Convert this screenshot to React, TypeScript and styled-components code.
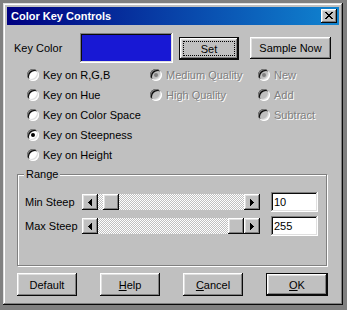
import styled, { createGlobalStyle, css } from "styled-components";

const GlobalStyle = createGlobalStyle`
  html, body {
    margin: 0;
    padding: 0;
    background: #808080;
  }
  body {
    font-family: "Liberation Sans", Arial, sans-serif;
    font-size: 11px;
    color: #000;
  }
`;

const raised = css`
  background: #c0c0c0;
  box-shadow:
    inset -1px -1px #0a0a0a,
    inset 1px 1px #fff,
    inset -2px -2px #808080,
    inset 2px 2px #dfdfdf;
`;

const sunken = css`
  box-shadow:
    inset -1px -1px #fff,
    inset 1px 1px #808080,
    inset -2px -2px #dfdfdf,
    inset 2px 2px #0a0a0a;
`;

const Screen = styled.div`
  width: 347px;
  height: 310px;
  padding: 3px 0 0 3px;
  box-sizing: border-box;
`;

const Window = styled.div`
  width: 340px;
  height: 302px;
  box-sizing: border-box;
  padding: 4px;
  background: #c0c0c0;
  box-shadow:
    inset -1px -1px #0a0a0a,
    inset 1px 1px #dfdfdf,
    inset -2px -2px #808080,
    inset 2px 2px #fff;
`;

const TitleBar = styled.div`
  height: 18px;
  display: flex;
  align-items: center;
  justify-content: space-between;
  padding: 0 2px 0 4px;
  background: linear-gradient(90deg, #000080, #1084d0);
  color: #fff;
  font-weight: bold;
  font-size: 11px;
`;

const CloseButton = styled.div`
  ${raised};
  width: 16px;
  height: 14px;
  display: flex;
  align-items: center;
  justify-content: center;
  padding-bottom: 1px;
  box-sizing: border-box;
`;

const TopRow = styled.div`
  display: flex;
  align-items: flex-start;
  margin-top: 8px;
  padding-left: 7px;
`;

const FieldLabel = styled.span<{ $width: number }>`
  width: ${(p) => p.$width}px;
  flex-shrink: 0;
  align-self: center;
  white-space: nowrap;
`;

const Swatch = styled.div`
  width: 93px;
  height: 30px;
  box-sizing: border-box;
  background: #1818d4;
  ${sunken};
`;

const Button = styled.div<{ $w: number; $h?: number; $default?: boolean; $focus?: boolean }>`
  ${raised};
  position: relative;
  width: ${(p) => p.$w}px;
  height: ${(p) => p.$h ?? 23}px;
  box-sizing: border-box;
  display: flex;
  align-items: center;
  justify-content: center;
  white-space: nowrap;
  ${(p) =>
    p.$default &&
    css`
      border: 1px solid #0a0a0a;
    `}
  ${(p) =>
    p.$focus &&
    css`
      &::after {
        content: "";
        position: absolute;
        inset: 3px;
        border: 1px dotted #000;
      }
    `}
  u {
    text-decoration: underline;
    text-underline-offset: 1px;
  }
`;

const TopButton = styled(Button)<{ $ml: number }>`
  margin-left: ${(p) => p.$ml}px;
  margin-top: 4px;
`;

const Options = styled.div`
  display: flex;
  margin-top: 2px;
  padding-left: 20px;
`;

const OptionColumn = styled.div<{ $width?: number }>`
  display: flex;
  flex-direction: column;
  width: ${(p) => (p.$width ? `${p.$width}px` : "auto")};
`;

const OptionRow = styled.label<{ $disabled?: boolean }>`
  height: 20px;
  display: flex;
  align-items: center;
  gap: 4px;
  white-space: nowrap;
  color: ${(p) => (p.$disabled ? "#808080" : "#000")};
  text-shadow: ${(p) => (p.$disabled ? "1px 1px 0 #fff" : "none")};
`;

const RadioCircle = styled.span<{ $checked?: boolean; $disabled?: boolean }>`
  width: 12px;
  height: 12px;
  flex-shrink: 0;
  border-radius: 50%;
  box-sizing: border-box;
  display: flex;
  align-items: center;
  justify-content: center;
  background: ${(p) => (p.$disabled ? "#c0c0c0" : "#fff")};
  ${sunken};
  &::after {
    content: "";
    width: 4px;
    height: 4px;
    border-radius: 50%;
    background: ${(p) => (p.$disabled ? "#808080" : "#000")};
    display: ${(p) => (p.$checked ? "block" : "none")};
  }
`;

const GroupBox = styled.div`
  position: relative;
  margin: 9px 0 0 10px;
  width: 310px;
  height: 92px;
  box-sizing: border-box;
  border: 1px solid #808080;
  box-shadow:
    inset 1px 1px #fff,
    1px 1px 0 #fff;
  padding: 17px 0 0 7px;
  display: flex;
  flex-direction: column;
  gap: 4px;
`;

const Legend = styled.span`
  position: absolute;
  top: -7px;
  left: 6px;
  padding: 0 2px;
  background: #c0c0c0;
`;

const SliderRow = styled.div`
  display: flex;
  align-items: center;
  height: 20px;
`;

const ScrollBar = styled.div`
  display: flex;
  width: 178px;
  height: 16px;
`;

const ArrowButton = styled.div`
  ${raised};
  width: 16px;
  height: 16px;
  flex-shrink: 0;
  display: flex;
  align-items: center;
  justify-content: center;
`;

const Track = styled.div`
  flex: 1;
  position: relative;
  background: repeating-conic-gradient(#c0c0c0 0% 25%, #fff 0% 50%) 0 0 / 2px 2px;
`;

const Thumb = styled.div`
  ${raised};
  position: absolute;
  top: 0;
  width: 16px;
  height: 16px;
`;

const TextBox = styled.div`
  ${sunken};
  background: #fff;
  margin-left: 11px;
  width: 47px;
  height: 20px;
  box-sizing: border-box;
  padding: 0 3px;
  display: flex;
  align-items: center;
`;

const ButtonRow = styled.div`
  display: flex;
  justify-content: space-between;
  width: 311px;
  margin: 7px 0 0 10px;
`;

const Pixels = ({ w, h, cells }: { w: number; h: number; cells: string[] }) => (
  <svg width={w} height={h} viewBox={`0 0 ${w} ${h}`} shapeRendering="crispEdges">
    {cells.flatMap((row, y) =>
      row.split("").map((c, x) =>
        c === "#" ? <rect key={`${x}-${y}`} x={x} y={y} width={1} height={1} fill="#000" /> : null,
      ),
    )}
  </svg>
);

const CLOSE = ["##....##", ".##..##.", "..####..", "...##...", "..####..", ".##..##.", "##....##"];
const LEFT = ["...#", "..##", ".###", "####", ".###", "..##", "...#"];
const RIGHT = ["#...", "##..", "###.", "####", "###.", "##..", "#..."];

const Slider = ({ label, value }: { label: string; value: number }) => {
  const travel = 178 - 32 - 16;
  return (
    <SliderRow>
      <FieldLabel $width={57}>{label}</FieldLabel>
      <ScrollBar>
        <ArrowButton>
          <Pixels w={4} h={7} cells={LEFT} />
        </ArrowButton>
        <Track>
          <Thumb style={{ left: Math.round((value / 255) * travel) }} />
        </Track>
        <ArrowButton>
          <Pixels w={4} h={7} cells={RIGHT} />
        </ArrowButton>
      </ScrollBar>
      <TextBox>{value}</TextBox>
    </SliderRow>
  );
};

type Opt = { text: string; checked?: boolean; disabled?: boolean };

const columns: { width?: number; items: Opt[] }[] = [
  {
    width: 123,
    items: [
      { text: "Key on R,G,B" },
      { text: "Key on Hue" },
      { text: "Key on Color Space" },
      { text: "Key on Steepness", checked: true },
      { text: "Key on Height" },
    ],
  },
  {
    width: 108,
    items: [
      { text: "Medium Quality", checked: true, disabled: true },
      { text: "High Quality", disabled: true },
    ],
  },
  {
    items: [
      { text: "New", checked: true, disabled: true },
      { text: "Add", disabled: true },
      { text: "Subtract", disabled: true },
    ],
  },
];

const App = () => {
  return (
    <Screen>
      <GlobalStyle />
      <Window>
        <TitleBar>
          <span>Color Key Controls</span>
          <CloseButton>
            <Pixels w={8} h={7} cells={CLOSE} />
          </CloseButton>
        </TitleBar>

        <TopRow>
          <FieldLabel $width={66}>Key Color</FieldLabel>
          <Swatch />
          <TopButton $w={60} $ml={6} $default $focus>
            Set
          </TopButton>
          <TopButton $w={81} $h={22} $ml={11}>
            Sample Now
          </TopButton>
        </TopRow>

        <Options>
          {columns.map((col, i) => (
            <OptionColumn key={i} $width={col.width}>
              {col.items.map((opt) => (
                <OptionRow key={opt.text} $disabled={opt.disabled}>
                  <RadioCircle $checked={opt.checked} $disabled={opt.disabled} />
                  {opt.text}
                </OptionRow>
              ))}
            </OptionColumn>
          ))}
        </Options>

        <GroupBox>
          <Legend>Range</Legend>
          <Slider label="Min Steep" value={10} />
          <Slider label="Max Steep" value={255} />
        </GroupBox>

        <ButtonRow>
          <Button $w={60}>Default</Button>
          <Button $w={60}>
            <span>
              <u>H</u>elp
            </span>
          </Button>
          <Button $w={60}>
            <span>
              <u>C</u>ancel
            </span>
          </Button>
          <Button $w={62} $default>
            <span>
              <u>O</u>K
            </span>
          </Button>
        </ButtonRow>
      </Window>
    </Screen>
  );
};

export default App;
